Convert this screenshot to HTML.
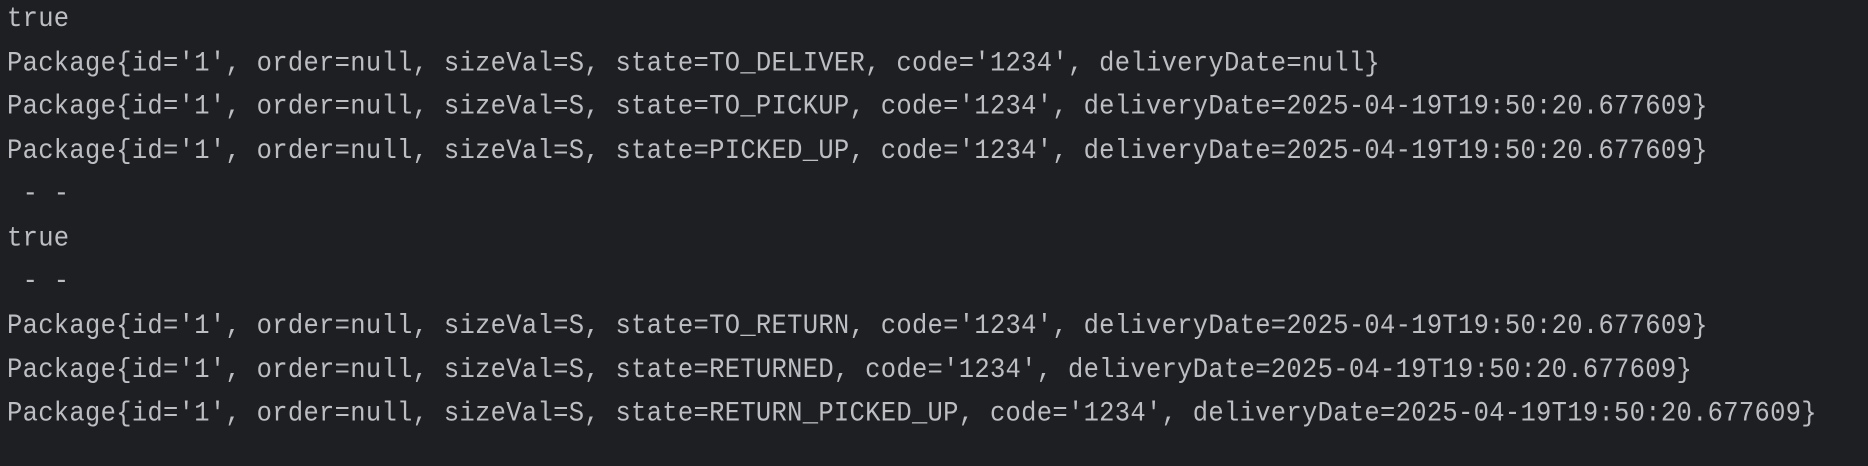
<!DOCTYPE html>
<html><head><style>
html,body{margin:0;padding:0;background:#1e1f22;width:1868px;height:466px;overflow:hidden}
pre{margin:0;position:absolute;left:7px;top:-2px;font-family:"Liberation Mono","DejaVu Sans Mono",monospace;font-size:25.5px;line-height:40.56px;color:#bcbec4;letter-spacing:0.3px;transform:scaleY(1.08);transform-origin:0 0}
</style></head><body>
<pre>true
Package{id='1', order=null, sizeVal=S, state=TO_DELIVER, code='1234', deliveryDate=null}
Package{id='1', order=null, sizeVal=S, state=TO_PICKUP, code='1234', deliveryDate=2025-04-19T19:50:20.677609}
Package{id='1', order=null, sizeVal=S, state=PICKED_UP, code='1234', deliveryDate=2025-04-19T19:50:20.677609}
 - -
true
 - -
Package{id='1', order=null, sizeVal=S, state=TO_RETURN, code='1234', deliveryDate=2025-04-19T19:50:20.677609}
Package{id='1', order=null, sizeVal=S, state=RETURNED, code='1234', deliveryDate=2025-04-19T19:50:20.677609}
Package{id='1', order=null, sizeVal=S, state=RETURN_PICKED_UP, code='1234', deliveryDate=2025-04-19T19:50:20.677609}</pre>
</body></html>
